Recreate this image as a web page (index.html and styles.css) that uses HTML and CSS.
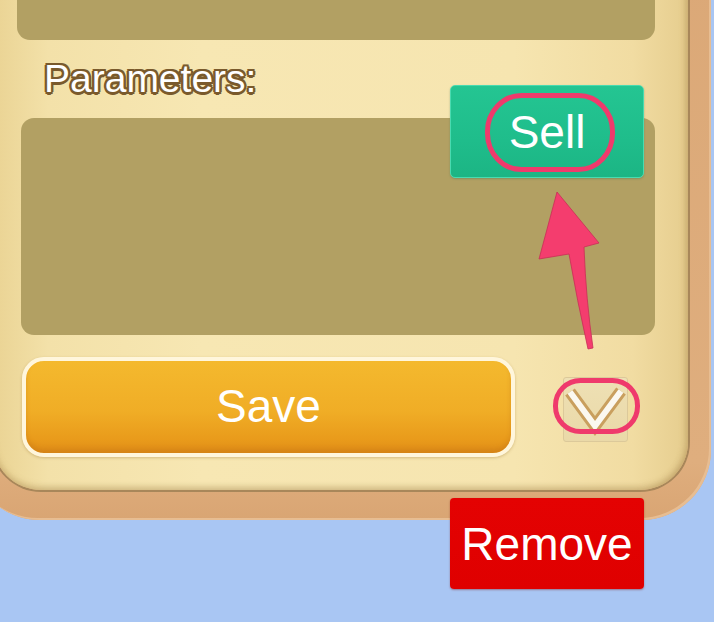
FILE: index.html
```html
<!DOCTYPE html>
<html lang="en">
<head>
<meta charset="utf-8">
<title>Parameters</title>
<link rel="stylesheet" href="styles.css">
</head>
<body>
<div class="frame">
  <div class="panel">
    <div class="box box-top"></div>
    <div class="label">Parameters:</div>
    <div class="box box-params"></div>
    <div class="actions">
      <div class="btn-save">Save</div>
      <div class="checkbox">
        <svg class="chev" width="65" height="65" viewBox="0 0 65 65">
          <polyline points="7,15 32,49 58,14" fill="none" stroke="#c99f5e" stroke-width="12" stroke-linejoin="miter" stroke-linecap="butt"/>
          <polyline points="7,15 32,49 58,14" fill="none" stroke="#fbf8f0" stroke-width="6" stroke-linejoin="miter" stroke-linecap="butt"/>
        </svg>
      </div>
    </div>
    <div class="btn-sell">Sell</div>
  </div>
</div>
<div class="remove-row">
  <div class="btn-remove">Remove</div>
</div>
<svg class="annot" width="714" height="622" viewBox="0 0 714 622">
  <rect x="487.5" y="95.5" width="125" height="74" rx="34" ry="36" fill="none" stroke="#ef3a6c" stroke-width="5"/>
  <rect x="555.5" y="380.5" width="82" height="51" rx="25" ry="25" fill="none" stroke="#ef3a6c" stroke-width="5"/>
  <path d="M557,192 L599,243 L584,247 Q586,300 593,348 L588,349 Q577,300 569,254 L539,259 Z" fill="#f43d6e" stroke="#c92e57" stroke-width="0.8"/>
</svg>
</body>
</html>
```
FILE: styles.css
```css
html, body {
  margin: 0;
  padding: 0;
}
body {
  width: 714px;
  height: 622px;
  overflow: hidden;
  position: relative;
  background: #a9c6f3;
  font-family: "Liberation Sans", Arial, sans-serif;
}
.frame {
  margin: -60px 0 0 -30px;
  width: 741px;
  box-sizing: border-box;
  padding: 0 23px 30px 23px;
  border-radius: 0 0 70px 70px;
  background: linear-gradient(180deg, #dba877 0%, #dfae7e 90%, #d9a573 100%);
  box-shadow: inset -2px -2px 0 #e7bd92;
}
.panel {
  position: relative;
  height: 550px;
  box-sizing: border-box;
  padding-bottom: 33px;
  border-radius: 0 0 48px 48px;
  background: linear-gradient(90deg, #ead393 0%, #f3e1a9 8%, #f7e7b3 30%, #f6e5b0 75%, #f1dca2 92%, #e6cd8e 100%);
  box-shadow: 0 0 0 2px #a8875a, inset 0 -3px 6px rgba(160, 125, 70, 0.35), inset -3px 0 6px rgba(160, 125, 70, 0.25);
  display: flex;
  flex-direction: column;
}
.box {
  background: #b2a063;
  border-radius: 13px;
}
.box-top {
  height: 100px;
  margin: 0 33px 0 24px;
  border-radius: 0 0 13px 13px;
}
.label {
  margin: 19px 0 0 51px;
  font-size: 39px;
  line-height: 39px;
  height: 39px;
  color: #ffffff;
  text-shadow:
    2.5px 0 0 #7a5a2c, -2.5px 0 0 #7a5a2c, 0 2.5px 0 #7a5a2c, 0 -2.5px 0 #7a5a2c,
    1.8px 1.8px 0 #7a5a2c, -1.8px 1.8px 0 #7a5a2c, 1.8px -1.8px 0 #7a5a2c, -1.8px -1.8px 0 #7a5a2c;
}
.box-params {
  height: 217px;
  margin: 20px 33px 0 28px;
}
.actions {
  margin: 22px 0 0 29px;
  display: flex;
  align-items: center;
  gap: 48px;
}
.btn-save {
  width: 493px;
  height: 100px;
  box-sizing: border-box;
  border: 4px solid #fff6dc;
  border-radius: 22px;
  background: linear-gradient(180deg, #f4b92e 0%, #f0ad26 55%, #e99b1b 85%, #e08d18 100%);
  box-shadow: 0 1px 3px rgba(150, 110, 40, 0.35), inset 0 -4px 4px rgba(200, 120, 20, 0.45);
  color: #ffffff;
  font-size: 46px;
  line-height: 1;
  display: flex;
  align-items: center;
  justify-content: center;
  padding-bottom: 2px;
}
.checkbox {
  width: 65px;
  height: 65px;
  box-sizing: border-box;
  margin-top: 5px;
  border: 1px solid #dcc99a;
  border-radius: 3px;
  background: linear-gradient(180deg, #eee0b4 0%, #ead9a8 100%);
  position: relative;
}
.chev {
  position: absolute;
  left: -1px;
  top: -1px;
}
.btn-sell {
  position: absolute;
  left: 457px;
  top: 145px;
  width: 194px;
  height: 93px;
  box-sizing: border-box;
  border: 1px solid #49dbb0;
  border-radius: 5px;
  background: linear-gradient(180deg, #24c592 0%, #1fbd8b 60%, #1cb584 100%);
  box-shadow: 0 1px 2px rgba(60, 120, 90, 0.4);
  color: #ffffff;
  font-size: 46px;
  line-height: 1;
  display: flex;
  align-items: center;
  justify-content: center;
}
.remove-row {
  margin-top: -22px;
  padding-left: 450px;
  display: flex;
}
.btn-remove {
  width: 194px;
  height: 91px;
  border-radius: 4px;
  background: linear-gradient(180deg, #e40202 0%, #df0000 100%);
  box-shadow: 0 1px 2px rgba(120, 0, 0, 0.4);
  color: #ffffff;
  font-size: 46px;
  line-height: 1;
  display: flex;
  align-items: center;
  justify-content: center;
}
.annot {
  position: absolute;
  left: 0;
  top: 0;
  pointer-events: none;
}
```
